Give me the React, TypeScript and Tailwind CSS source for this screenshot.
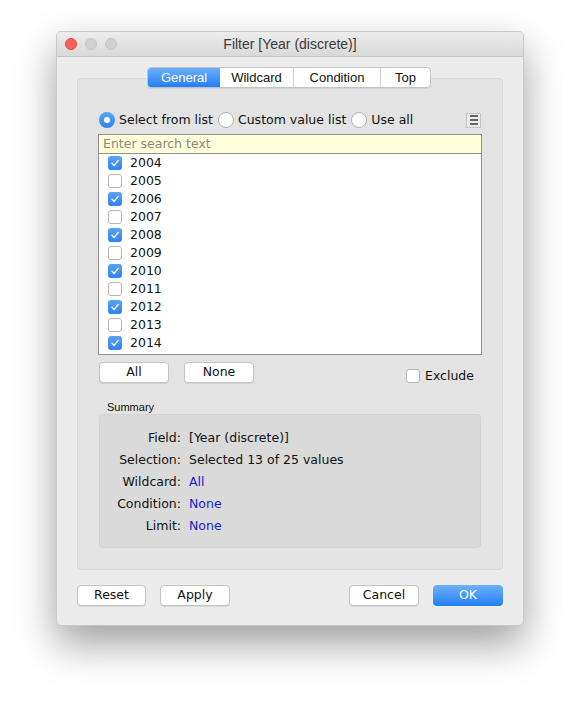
import React from "react";

const years = [
  [2004, true], [2005, false], [2006, true], [2007, false], [2008, true], [2009, false],
  [2010, true], [2011, false], [2012, true], [2013, false], [2014, true],
] as const;

function Check({ checked }: { checked: boolean }) {
  return checked ? (
    <span className="flex h-[14px] w-[14px] items-center justify-center rounded-[3px] bg-gradient-to-b from-[#5aa3f7] to-[#2e83f0]">
      <svg width="10" height="10" viewBox="0 0 10 10">
        <path d="M2 5.2 L4.2 7.4 L8.2 2.4" stroke="white" strokeWidth="1.4" fill="none" strokeLinecap="round" strokeLinejoin="round" />
      </svg>
    </span>
  ) : (
    <span className="block h-[14px] w-[14px] rounded-[3px] border border-[#b5b5b5] bg-white" />
  );
}

function Radio({ on }: { on: boolean }) {
  return on ? (
    <span className="flex h-[16px] w-[16px] items-center justify-center rounded-full bg-gradient-to-b from-[#5aa3f7] to-[#2e83f0]">
      <span className="h-[6px] w-[6px] rounded-full bg-white" />
    </span>
  ) : (
    <span className="block h-[16px] w-[16px] rounded-full border border-[#b0b0b0] bg-white" />
  );
}

function Btn({ children, w }: { children: React.ReactNode; w: string }) {
  return (
    <div className={`flex h-[21px] items-center justify-center rounded-[4px] border border-[#c3c3c3] bg-white text-[12.5px] text-[#111] shadow-[0_1px_0_rgba(0,0,0,0.08)] ${w}`}>
      {children}
    </div>
  );
}

export default function App() {
  const font = { fontFamily: '"DejaVu Sans", "Liberation Sans", sans-serif' };
  return (
    <div className="min-h-[705px] w-[580px] bg-white pl-[56px] pt-[31px]" style={font}>
      <div className="flex h-[595px] w-[468px] flex-col overflow-hidden rounded-[5px] border border-[#c8c8c8] bg-[#ececec] shadow-[0_18px_40px_rgba(0,0,0,0.38)]">
        {/* title bar */}
        <div className="relative flex h-[25px] shrink-0 items-center justify-center border-b border-[#c6c6c6] bg-gradient-to-b from-[#ececec] to-[#d9d9d9]">
          <div className="absolute left-[8px] top-[6px] flex gap-[8px]">
            <span className="h-[12px] w-[12px] rounded-full border border-[#e0443e] bg-[#fc605c]" />
            <span className="h-[12px] w-[12px] rounded-full border border-[#c4c4c4] bg-[#d0d0d0]" />
            <span className="h-[12px] w-[12px] rounded-full border border-[#c4c4c4] bg-[#d0d0d0]" />
          </div>
          <span className="text-[14px] text-[#3a3a3a]" style={{ fontFamily: '"Liberation Sans", sans-serif' }}>Filter [Year (discrete)]</span>
        </div>

        {/* body */}
        <div className="flex flex-1 flex-col px-[20px] pt-[10px]">
          <div className="relative z-10 flex justify-center">
            <div className="-ml-[2px] flex h-[21px] overflow-hidden rounded-[4px] border border-[#c3c3c3] bg-white text-[13px] text-[#111] shadow-[0_1px_0_rgba(0,0,0,0.06)]" style={{ fontFamily: '"Liberation Sans", sans-serif' }}>
              <div className="flex w-[72px] items-center justify-center bg-gradient-to-b from-[#6cb0fb] to-[#1f7ff4] text-white">General</div>
              <div className="flex w-[74px] items-center justify-center border-r border-[#d0d0d0]">Wildcard</div>
              <div className="flex w-[87px] items-center justify-center border-r border-[#d0d0d0]">Condition</div>
              <div className="flex w-[49px] items-center justify-center">Top</div>
            </div>
          </div>
          <div className="-mt-[10px] flex h-[492px] flex-col rounded-[4px] border border-[#d8d8d8] bg-[#e3e3e3] px-[21px] pt-[32px]">
            {/* radios */}
            <div className="flex h-[18px] items-center text-[12.5px] text-[#111]">
              <Radio on />
              <span className="ml-[4px]">Select from list</span>
              <span className="ml-[5px]"><Radio on={false} /></span>
              <span className="ml-[4px]">Custom value list</span>
              <span className="ml-[5px]"><Radio on={false} /></span>
              <span className="ml-[4px]">Use all</span>
              <span className="ml-auto flex h-[15px] w-[15px] flex-col items-center justify-center gap-[2px] border border-[#c4c4c4] bg-[#ececec]">
                <span className="h-[2px] w-[8px] bg-[#666]" />
                <span className="h-[2px] w-[8px] bg-[#666]" />
                <span className="h-[2px] w-[8px] bg-[#666]" />
              </span>
            </div>

            {/* list */}
            <div className="mt-[5px] flex h-[221px] w-[384px] -ml-[1px] flex-col border border-[#8f8f8f] bg-white">
              <div className="flex h-[19px] items-center border-b border-[#8f8f8f] bg-[#ffffdc] pl-[4px] text-[12.5px] text-[#8a8a7a]">Enter search text</div>
              {years.map(([y, c]) => (
                <div key={y} className="flex h-[18px] items-center pl-[9px] text-[12.5px] text-[#111]">
                  <Check checked={c} />
                  <span className="ml-[8px]">{y}</span>
                </div>
              ))}
            </div>

            {/* All / None / Exclude */}
            <div className="mt-[7px] flex items-start">
              <Btn w="w-[70px]">All</Btn>
              <div className="ml-[15px]"><Btn w="w-[70px]">None</Btn></div>
              <div className="ml-auto mr-[7px] mt-[5px] flex items-center text-[12.5px] text-[#111]">
                <Check checked={false} />
                <span className="ml-[5px]">Exclude</span>
              </div>
            </div>

            {/* summary */}
            <div className="mt-[14px] pl-[8px] text-[11px] leading-[14px] text-[#111]" style={{ fontFamily: '"Liberation Sans", sans-serif' }}>Summary</div>
            <div className="flex h-[134px] flex-col rounded-[4px] border border-[#d2d2d2] bg-[#dadada] pt-[13px] text-[12.5px] text-[#111]">
              {[
                ["Field:", "[Year (discrete)]", false],
                ["Selection:", "Selected 13 of 25 values", false],
                ["Wildcard:", "All", true],
                ["Condition:", "None", true],
                ["Limit:", "None", true],
              ].map(([l, v, link]) => (
                <div key={l as string} className="flex h-[22px] items-center">
                  <span className="w-[81px] text-right">{l}</span>
                  <span className={`ml-[8px] ${link ? "text-[#1a1ad0]" : ""}`}>{v}</span>
                </div>
              ))}
            </div>
          </div>

          {/* bottom buttons */}
          <div className="mt-[15px] flex items-center">
            <Btn w="w-[69px]">Reset</Btn>
            <div className="ml-[14px]"><Btn w="w-[70px]">Apply</Btn></div>
            <div className="ml-auto"><Btn w="w-[70px]">Cancel</Btn></div>
            <div className="ml-[14px] flex h-[21px] w-[70px] items-center justify-center rounded-[4px] bg-gradient-to-b from-[#6cb0fb] to-[#1f7ff4] text-[12.5px] text-white">OK</div>
          </div>
        </div>
      </div>
    </div>
  );
}
